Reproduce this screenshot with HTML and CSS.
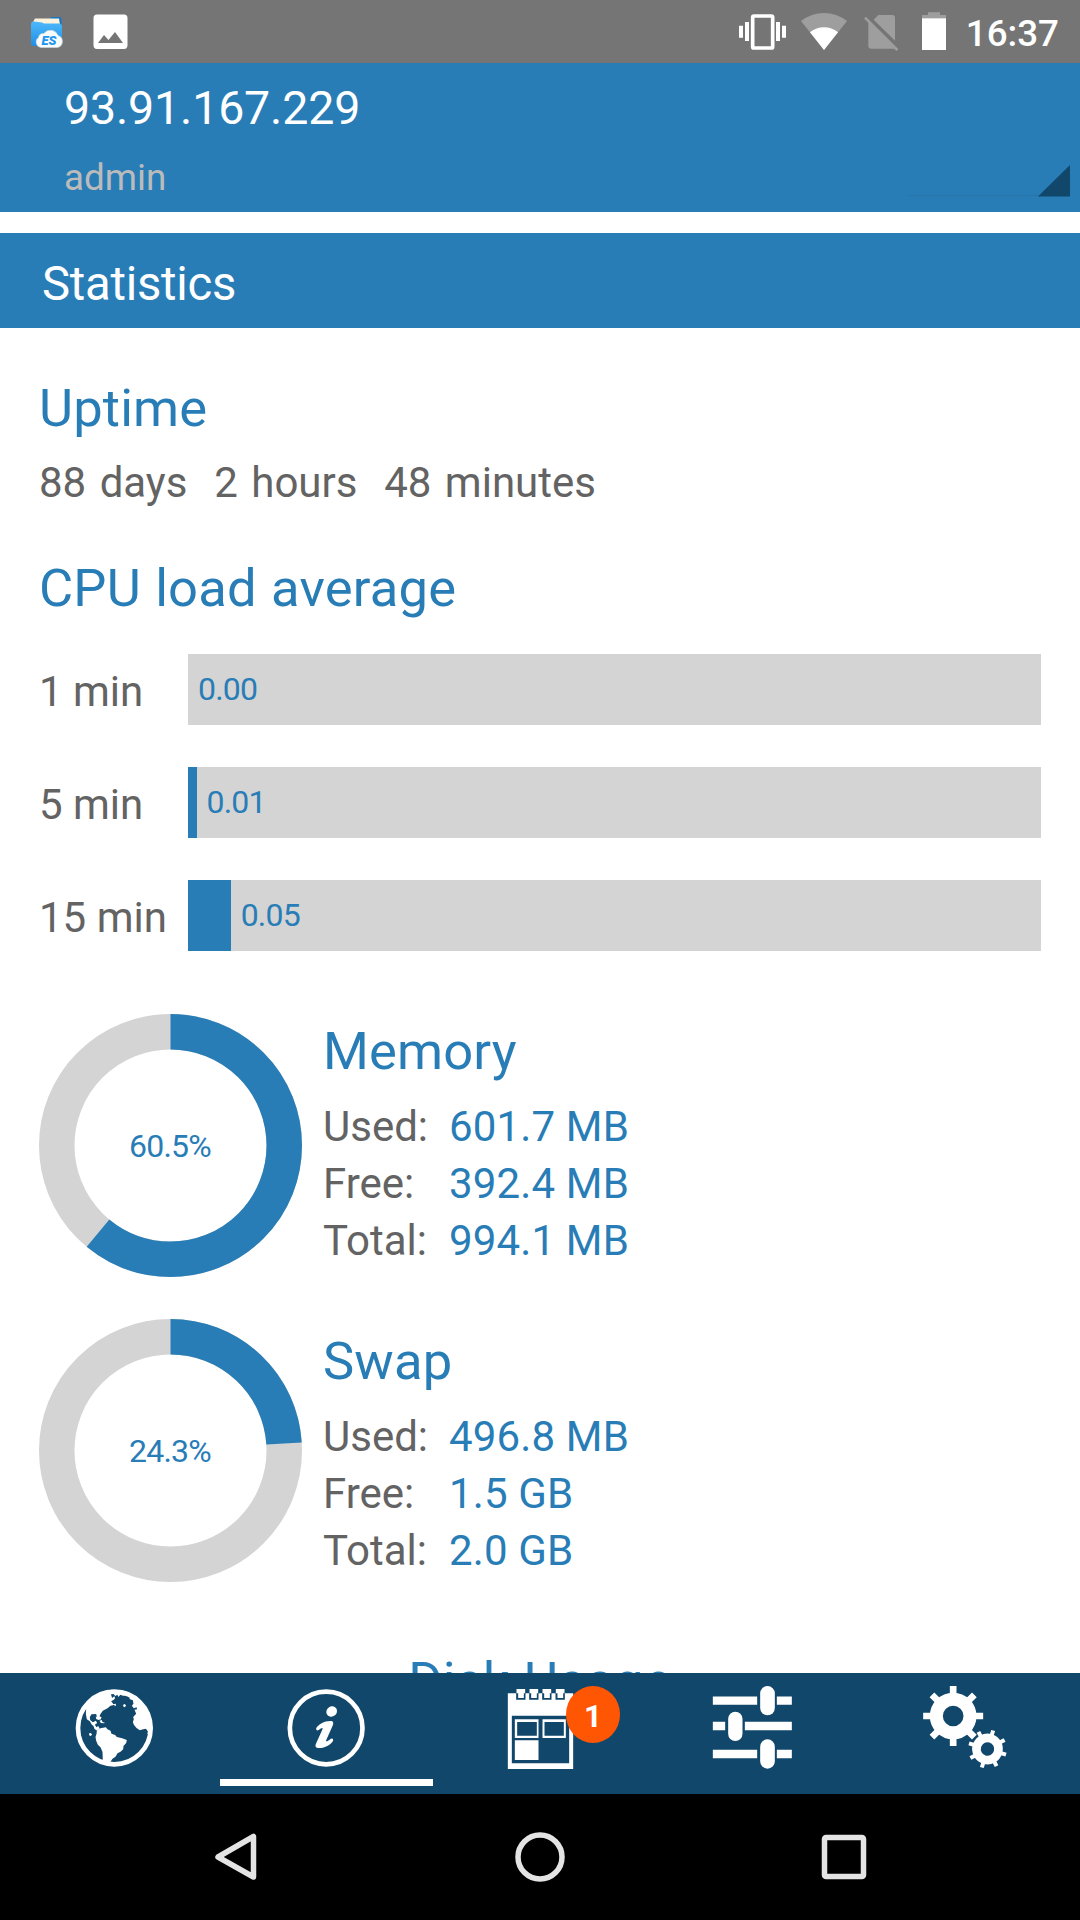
FILE: index.html
```
<!DOCTYPE html>
<html lang="en">
<head>
  <meta charset="UTF-8" />
  <title>Statistics - 93.91.167.229</title>
  <link rel="stylesheet" href="styles.css">
</head>
<body>
  <div class="status-bar">
    <svg class="icon-es" viewBox="0 0 36 36">
      <defs>
        <linearGradient id="folder" x1="0" y1="0" x2="0" y2="1">
          <stop offset="0" stop-color="#4db8fb"/>
          <stop offset="1" stop-color="#1f8fe4"/>
        </linearGradient>
      </defs>
      <path d="M20 1H28Q30.500 1 30.500 4V12H20Z" fill="#1376c6"/>
      <path d="M2 6L4 2.500H28L29 9H2Z" fill="#fdf3dc"/>
      <path d="M0 8Q0 5 3 5.500L11 6.500L13 7.500H28Q31 8 31 10V27Q31 30 28 30H3Q0 30 0 27Z" fill="url(#folder)"/>
      <path d="M10 31.500A5.500 5.500 0 0 1 7.500 21.500A5 5 0 0 1 13 17.500A8 8 0 0 1 27 19.500A6.200 6.200 0 0 1 26.500 31.500Z" fill="#fbfcfd" stroke="#c9d3da" stroke-width="0.700"/>
      <text x="10.500" y="29" textLength="15" lengthAdjust="spacingAndGlyphs">ES</text>
    </svg>
    <svg class="icon-image" viewBox="0 0 36 36">
      <path fill-rule="evenodd" d="M4 0.500H31Q34.500 0.500 34.500 4V31Q34.500 35 31 35H4Q0.500 35 0.500 31V4Q0.500 0.500 4 0.500ZM5 29H30L22 18L15.500 26L11 21Z" fill="#fff"/>
    </svg>
    <div class="status-right">
      <svg class="icon-vibrate" viewBox="117 0 141 189">
        <rect x="158" y="48" width="60" height="96" rx="4" fill="none" stroke="#fff" stroke-width="11"/>
        <path d="M117 77h12v36h-12zM135 66h12v57h-12zM228 66h12v57h-12zM246 77h12v36h-12z" fill="#fff"/>
      </svg>
      <svg class="icon-wifi" viewBox="303 0 138 189">
        <path d="M303 63Q334 39 372 39Q410 39 441 63L372 150Z" fill="#9e9e9e"/>
        <path d="M330 97Q349 82 372 82Q395 82 414 97L372 150Z" fill="#fff"/>
      </svg>
      <svg class="icon-sim" viewBox="492 0 102 189">
        <path d="M521 59L535 45H577Q585 45 585 53V122ZM505 65L585 146H514Q505 146 505 137Z" fill="#9e9e9e"/>
        <path d="M495 53L592 150" stroke="#9e9e9e" stroke-width="8"/>
      </svg>
      <svg class="icon-battery" viewBox="666 0 72 189">
        <path d="M684 37H720V45H738V57H666V45H684Z" fill="#9e9e9e"/>
        <path d="M666 55H738V150H666Z" fill="#fff"/>
      </svg>
      <span class="clock">16:37</span>
    </div>
  </div>

  <header class="server">
    <div class="server-ip">93.91.167.229</div>
    <div class="server-user">admin</div>
    <svg class="server-arrow" viewBox="0 0 161 32">
      <path d="M0 30.500H130" stroke="#2674aa" stroke-width="1"/>
      <path d="M161 0V31.500H129Z" fill="#11476b"/>
    </svg>
  </header>

  <div class="title-bar">Statistics</div>

  <main class="content">
    <h2>Uptime</h2>
    <p class="uptime">88 days&nbsp; 2 hours&nbsp; 48 minutes</p>

    <h2 class="cpu-title">CPU load average</h2>
    <div class="loads">
      <div class="load">
        <span class="load-label">1 min</span>
        <div class="bar"><div class="fill" style="width: 0%"></div><span class="load-value">0.00</span></div>
      </div>
      <div class="load">
        <span class="load-label">5 min</span>
        <div class="bar"><div class="fill" style="width: 1%"></div><span class="load-value">0.01</span></div>
      </div>
      <div class="load">
        <span class="load-label">15 min</span>
        <div class="bar"><div class="fill" style="width: 5%"></div><span class="load-value">0.05</span></div>
      </div>
    </div>

    <section class="usage memory">
      <div class="donut">
        <svg viewBox="0 0 263 263">
          <circle class="ring" cx="131.500" cy="131.500" r="113.750"/>
          <circle class="ring used" cx="131.500" cy="131.500" r="113.750" pathLength="100" stroke-dasharray="61 39"/>
        </svg>
        <span>60.5%</span>
      </div>
      <div class="usage-info">
        <h2>Memory</h2>
        <dl>
          <dt>Used:</dt><dd>601.7 MB</dd>
          <dt>Free:</dt><dd>392.4 MB</dd>
          <dt>Total:</dt><dd>994.1 MB</dd>
        </dl>
      </div>
    </section>

    <section class="usage swap">
      <div class="donut">
        <svg viewBox="0 0 263 263">
          <circle class="ring" cx="131.500" cy="131.500" r="113.750"/>
          <circle class="ring used" cx="131.500" cy="131.500" r="113.750" pathLength="100" stroke-dasharray="24 76"/>
        </svg>
        <span>24.3%</span>
      </div>
      <div class="usage-info">
        <h2>Swap</h2>
        <dl>
          <dt>Used:</dt><dd>496.8 MB</dd>
          <dt>Free:</dt><dd>1.5 GB</dd>
          <dt>Total:</dt><dd>2.0 GB</dd>
        </dl>
      </div>
    </section>

    <h2 class="disk-title">Disk Usage</h2>
  </main>

  <nav class="tabs">
    <div class="tab">
      <!-- globe -->
      <svg viewBox="215.500 138 252 252">
        <circle cx="342.500" cy="264" r="109" fill="none" stroke="#fff" stroke-width="14"/>
        <path d="M258 207Q255 224 260 238L269 244L275 254L280 258L283 267L291 272L299 266L294 258L289 262L284 254L291 249L287 242L278 247L270 240L269 231L274 223L288 222L291 233L302 238L304 232L298 229L301 222L308 212L322 205L331 197L341 195L347 199L347 191L340 193L333 184L341 179L345 174L342 169L336 174L332 163L340 161L345 168L352 164L354 171L361 164L368 167L377 166L390 169L388 177L398 181L400 191L395 197L401 205L409 202L411 208L403 209L408 221L399 231L401 238L398 246L401 254L409 264L419 271L429 268L437 266L443 274L442 282H452L455 250L442 208L412 172L375 153L335 149L290 162L252 195Z"/>
        <path d="M286 291L289 282L290 272L301 265L317 262L322 268L331 272L334 281L345 285L350 291L366 295L380 300L378 309L370 318L369 328L361 335L352 340L346 350L337 356L331 365L320 370L308 362L307 336L301 322L293 314L288 302ZM267 280L272 279L276 284L271 288L267 286ZM287 228L292 233L303 234L302 238L295 240L288 237ZM298 242L305 240L307 246L314 248L312 250L302 249ZM369 194L374 192L378 197L373 202L369 199ZM406 190L418 196L410 202Z"/>
      </svg>
    </div>
    <div class="tab active">
      <!-- info -->
      <svg viewBox="854.500 138 252 252">
        <circle cx="978" cy="264" r="109" fill="none" stroke="#fff" stroke-width="14"/>
        <ellipse cx="994.500" cy="214.500" rx="16.500" ry="15" transform="rotate(-35 994.500 214.500)"/>
        <path d="M948 265C956 252 972 242 994 243Q1002 245 998 256L978 301C977 306 980 306 992 296Q1000 293 999 302C989 317 970 325 953 324Q943 322 947 312L967 268C968 262 965 263 956 270Q947 274 948 265Z"/>
      </svg>
    </div>
    <div class="tab">
      <!-- calendar -->
      <svg viewBox="353.500 138 252 252">
        <path fill-rule="evenodd" d="M383 160H579V387H383ZM395 227V370H567V227Z"/>
        <path fill-rule="evenodd" d="M404 238H475V294H404ZM411 246V287H470V246ZM487 238H557V294H487ZM493 246V287H551V246ZM404 301H475V360H404Z"/>
        <path class="cut" d="M408 157h28v22h-28zM447 157h28v22h-28zM486 157h28v22h-28zM526 157h28v22h-28z"/>
        <path d="M409 147h26v13h-4v14h-17v-14h-5zM448 147h26v13h-4v14h-17v-14h-5zM487 147h26v13h-4v14h-17v-14h-5zM527 147h26v13h-4v14h-17v-14h-5z"/>
      </svg>
      <span class="badge">1</span>
    </div>
    <div class="tab">
      <!-- sliders -->
      <svg viewBox="152.500 138 252 252">
        <path d="M158 169.500h133v25h-133zM350 169.500h45v25h-45zM158 245.500h37v25h-37zM254 245.500h141v25h-141zM158 329.500h133v25h-133zM350 329.500h45v25h-45z"/>
        <rect x="300" y="138" width="44" height="88" rx="22"/>
        <rect x="204" y="215" width="43" height="88" rx="21.500"/>
        <rect x="300" y="298" width="44" height="88" rx="22"/>
      </svg>
    </div>
    <div class="tab">
      <!-- gears -->
      <svg viewBox="791.500 138 252 252">
        <g transform="translate(879 228)" fill="none" stroke="#fff">
          <circle r="50.500" stroke-width="39"/>
          <path stroke-width="20" d="M0-90V-60M0 60V90M-90 0H-60M60 0H90"/>
          <path stroke-width="20" transform="rotate(45)" d="M0-90V-60M0 60V90M-90 0H-60M60 0H90"/>
        </g>
        <g transform="translate(982 327) rotate(17)" fill="none" stroke="#fff">
          <circle r="33" stroke-width="26"/>
          <path stroke-width="12" d="M0-58V-40M0 40V58M-58 0H-40M40 0H58"/>
          <path stroke-width="12" transform="rotate(45)" d="M0-58V-40M0 40V58M-58 0H-40M40 0H58"/>
        </g>
      </svg>
    </div>
  </nav>

  <div class="nav-bar">
    <svg viewBox="0 0 50 50"><path d="M42.500 4.500V45L7 25Z" stroke-linejoin="round"/></svg>
    <svg viewBox="0 0 50 50"><circle cx="25" cy="25" r="22"/></svg>
    <svg viewBox="0 0 50 50"><rect x="5.500" y="5.500" width="39" height="39" rx="1.500"/></svg>
  </div>
</body>
</html>
```
FILE: styles.css
```
* { box-sizing: border-box; }
body {
  margin: 0;
  width: 1080px;
  height: 1920px;
  display: flex;
  flex-direction: column;
  overflow: hidden;
  background: #fff;
  color: #636363;
  font-family: Roboto, sans-serif;
}
svg { display: block; flex: none; }
h2, p, dl, dd { margin: 0; }
h2 { font-size: 52.5px; line-height: 60px; font-weight: 400; letter-spacing: 0.15px; color: #287db7; }

.status-bar {
  display: flex;
  height: 63px;
  flex: none;
  padding: 0 21px 0 31px;
  background: #757575;
}
.icon-es { width: 36px; height: 36px; margin-top: 16px; }
.icon-es text { font-size: 13px; font-weight: 900; font-style: italic; fill: #2196ee; }
.icon-image { width: 36px; height: 36px; margin: 14px 0 0 26px; }
.status-right { display: flex; margin-left: auto; }
.status-right svg { height: 63px; }
.icon-vibrate { width: 47px; margin-right: 15px; }
.icon-wifi { width: 46px; margin-right: 17px; }
.icon-sim { width: 34px; margin-right: 24px; }
.icon-battery { width: 24px; margin-right: 20px; }
.clock { color: #fff; font-size: 36.75px; font-weight: 500; line-height: 67px; }

.server {
  position: relative;
  flex: none;
  height: 149px;
  padding: 15px 0 0 64px;
  background: #287db7;
}
.server-ip { color: #fff; font-size: 46.5px; line-height: 60px; letter-spacing: -0.15px; }
.server-user { margin-top: 10px; color: #bbb; font-size: 36.75px; line-height: 60px; }
.server-arrow { position: absolute; right: 10px; bottom: 15px; width: 161px; height: 32px; }

.title-bar {
  flex: none;
  height: 95px;
  margin-top: 21px;
  padding: 5px 42px 0;
  background: #287db7;
  color: #fff;
  font-size: 47.25px;
  line-height: 92px;
  letter-spacing: -0.25px;
}

.content {
  flex: none;
  height: 1345px;
  padding: 50px 39px 0;
  overflow: hidden;
}
.uptime { margin-top: 16px; font-size: 42px; line-height: 57px; word-spacing: 3px; }
.cpu-title { margin-top: 47px; letter-spacing: 0.2px; word-spacing: 1px; }
.loads { display: flex; flex-direction: column; gap: 42px; margin-top: 36px; }
.load { display: flex; height: 71px; }
.load-label { width: 149px; padding-top: 2px; font-size: 42px; line-height: 71px; white-space: nowrap; }
.bar { display: flex; flex: 1; background: #d4d4d4; }
.fill { background: #287db7; }
.load-value { margin-left: 10px; color: #287db7; font-size: 32px; line-height: 71px; letter-spacing: -0.8px; }

.usage { display: flex; height: 263px; margin-top: 42px; }
.memory { margin-top: 63px; }
.donut { display: grid; width: 263px; height: 263px; place-items: center; }
.donut svg, .donut span { grid-area: 1 / 1; }
.donut svg { width: 263px; height: 263px; transform: rotate(-90deg); }
.donut span { padding: 1px 1px 0 0; color: #287db7; font-size: 32px; line-height: 36px; letter-spacing: -0.8px; }
.ring { fill: none; stroke: #d4d4d4; stroke-width: 35.5; }
.ring.used { stroke: #287db7; }
.usage-info { padding: 7px 0 0 21px; }
.swap .usage-info { padding-top: 12px; }
dl {
  display: grid;
  grid-template-columns: 126px auto;
  margin-top: 17px;
  font-size: 42px;
  line-height: 57px;
}
dd { color: #287db7; letter-spacing: 0.15px; }
.disk-title { margin-top: 69px; text-align: center; word-spacing: 1px; }

.tabs {
  display: flex;
  flex: none;
  height: 121px;
  padding-left: 7px;
  background: #11476b;
}
.tab {
  position: relative;
  width: 213px;
  height: 113px;
  padding-top: 13px;
}
.tab.active { border-bottom: 7px solid #fff; }
.tab svg { width: 84px; height: 84px; margin: 0 auto; overflow: visible; fill: #fff; }
.tab .cut { fill: #11476b; }
.badge {
  position: absolute;
  left: 133px;
  top: 13px;
  width: 54px;
  height: 57px;
  border-radius: 50%;
  background: #ff5604;
  color: #fff;
  font-size: 31.5px;
  font-weight: 700;
  line-height: 61px;
  text-align: center;
}

.nav-bar {
  display: flex;
  flex: none;
  height: 126px;
  padding: 38px 211px 0;
  justify-content: space-between;
  background: #000;
}
.nav-bar svg { width: 50px; height: 50px; fill: none; stroke: #e4e4e4; stroke-width: 5.5; }
```
